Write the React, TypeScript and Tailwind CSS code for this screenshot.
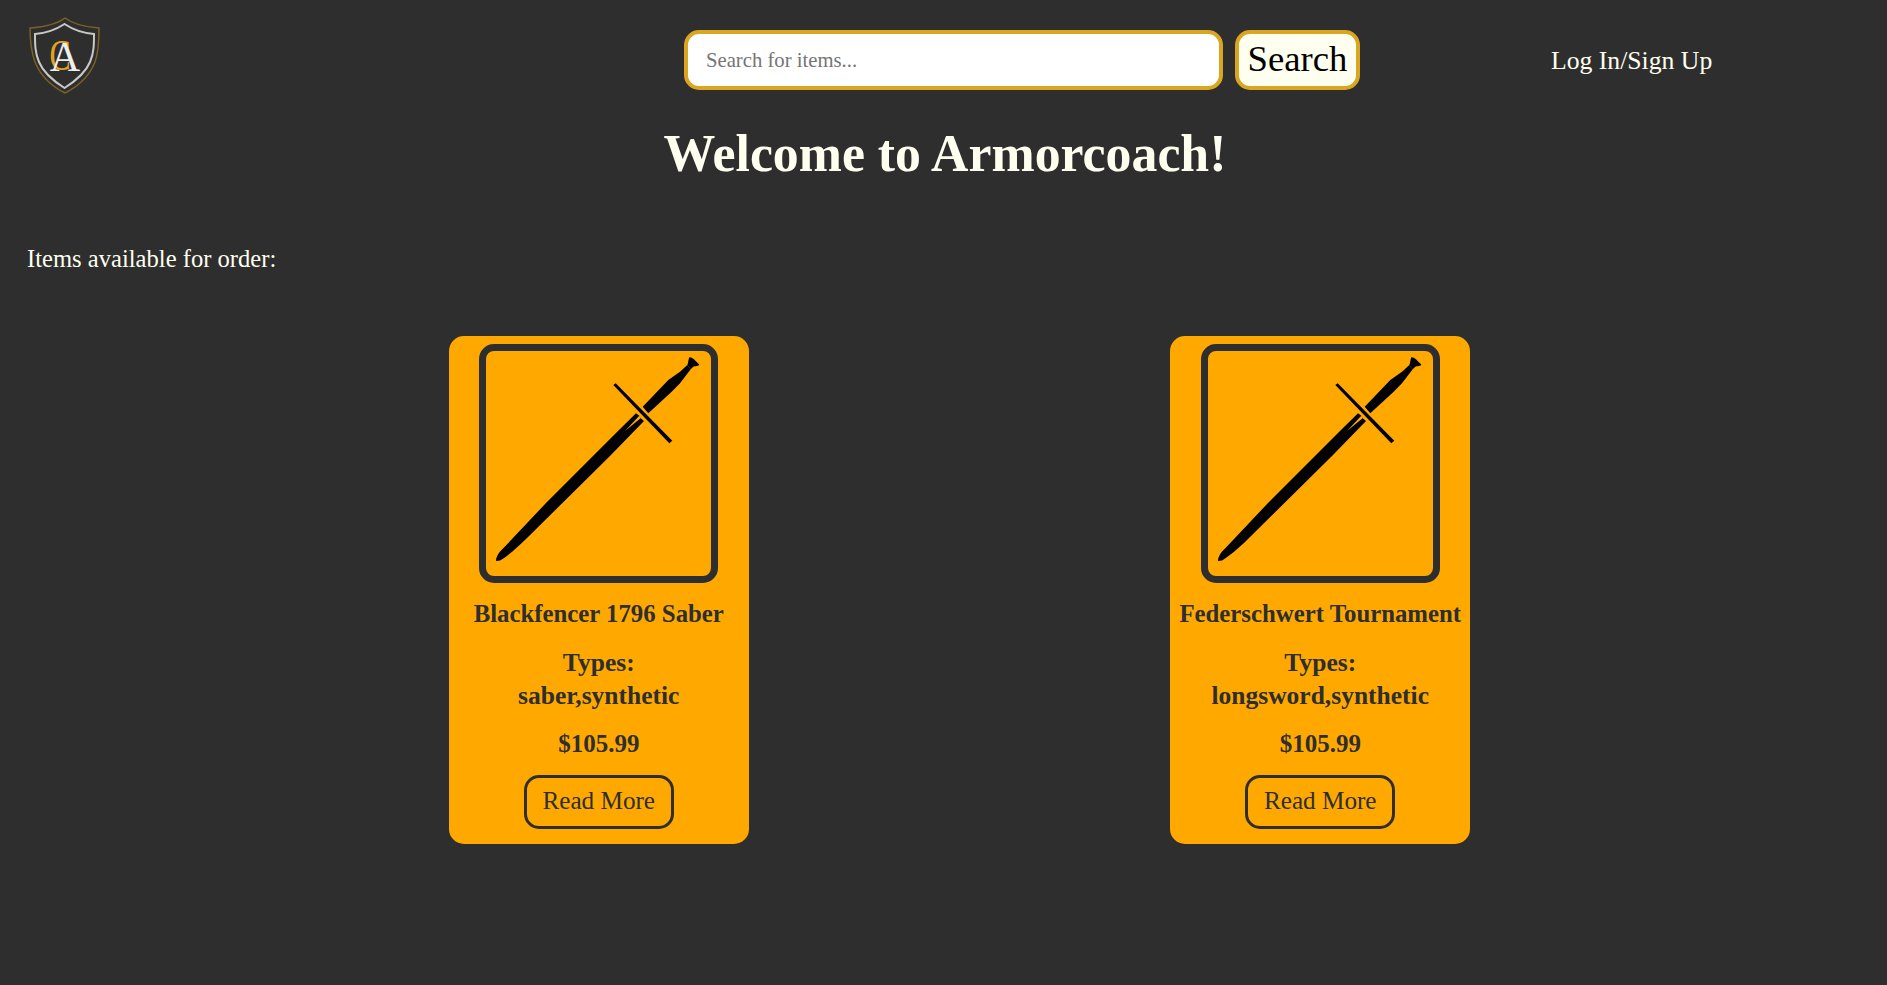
const items = [
  { name: "Blackfencer 1796 Saber", types: "saber,synthetic", price: "$105.99" },
  { name: "Federschwert Tournament", types: "longsword,synthetic", price: "$105.99" },
];

function Logo() {
  return (
    <svg className="w-[73px] h-[77px]" viewBox="0 0 73 77" fill="none">
      <path
        d="M37 1 C45 7 56 10 71 11 C71 22 71 34 67 45 C61 60 49 70 37 76 C25 70 13 60 7 45 C3 34 2 22 2 11 C18 10 29 7 37 1 Z"
        stroke="#7a6125"
        strokeWidth="1.5"
      />
      <path
        d="M36.5 7 C44 12 54 16 66 17 C66 27 66 36 62 45 C57 57 46 65 36.5 71 C27 65 16 57 11 45 C7 36 7 27 7 17 C19 16 29 12 36.5 7 Z"
        stroke="#c8c8c4"
        strokeWidth="2"
      />
      <text
        x="32"
        y="53"
        textAnchor="middle"
        fontSize="44"
        fill="#e0a420"
        fontFamily="'Liberation Serif', serif"
        transform="translate(32 0) scale(0.72 1) translate(-32 0)"
      >
        C
      </text>
      <text x="37" y="54" textAnchor="middle" fontSize="42" fill="#eeeeea" fontFamily="'Liberation Serif', serif">
        A
      </text>
    </svg>
  );
}

function Sword() {
  return (
    <svg className="w-full h-full" viewBox="0 0 225 225">
      {/* pommel */}
      <path d="M203.3 6.3 C206 5.8 209 9 213.2 13.6 C213.5 15 211 15 207.3 15.7 L204.7 18.3 L201.3 14 C202.3 12 202.3 9 203.3 6.3 Z" fill="#000" />
      {/* grip */}
      <path d="M201.3 14 L204.7 18.3 L194 32.3 L185.7 40.7 L162.3 62.3 L156.7 55.7 L182.3 29 L194 20.7 Z" fill="#000" />
      {/* guard */}
      <path d="M127.3 34 L129.7 32.3 L186.3 89.7 L183.3 92.3 Z" fill="#000" />
      {/* blade */}
      <path d="M150 62.3 L153.3 64.7 L154.7 67.3 L158 70 L124 105 L40 188 C30 198 20 206 14 209.5 L10 210 C10 206 13 201 17.3 197.3 L60 152 L134 78 Z" fill="#000" />
      {/* fuller */}
      <path d="M153.3 64.7 L154.9 67.1 L139 80 Z" fill="#ffa900" />
    </svg>
  );
}

function ItemCard({ name, types, price }: { name: string; types: string; price: string }) {
  return (
    <div className="w-[300px] h-[508px] bg-[#ffa900] rounded-[15px] flex flex-col items-center pt-2 text-[#2e2e2e]">
      <div className="w-[239px] h-[239px] border-[7px] border-[#2e2e2e] rounded-[15px]">
        <Sword />
      </div>
      <h3 className="mt-[15px] text-[24.8px] leading-[32px] font-bold whitespace-nowrap">{name}</h3>
      <p className="mt-[16px] text-[25.5px] leading-[33px] font-bold text-center">
        Types:
        <br />
        {types}
      </p>
      <p className="mt-[16px] text-[25px] leading-[32px] font-bold">{price}</p>
      <button className="mt-[15px] w-[150px] h-[54px] pb-[2px] border-[3px] border-[#2e2e2e] rounded-[15px] text-[25.2px]">
        Read More
      </button>
    </div>
  );
}

export default function App() {
  return (
    <div className="min-h-[985px] bg-[#2e2e2e] font-['Liberation_Serif',serif] text-[#fffff0]">
      <header className="flex items-start h-[112px]">
        <div className="w-[684px] pl-[28px] pt-[17px] shrink-0">
          <Logo />
        </div>
        <div className="flex gap-[12px] pt-[30px]">
          <input
            placeholder="Search for items..."
            className="w-[539px] h-[60px] bg-white border-4 border-[#daa520] rounded-[15px] px-[18px] text-[20.7px] text-black placeholder:text-[#757575] outline-none"
          />
          <button className="w-[125px] h-[60px] pb-[2px] leading-none bg-[#fffff0] border-4 border-[#daa520] rounded-[15px] text-[36.7px] text-black">
            Search
          </button>
        </div>
        <a className="ml-[191px] pt-[41px] text-[25.7px] leading-[40px] whitespace-nowrap">Log In/Sign Up</a>
      </header>
      <h1 className="text-[51.8px] leading-[64px] font-bold text-center mt-[9px] pl-[3px] pt-[1px]">Welcome to Armorcoach!</h1>
      <p className="mt-[57px] pl-[27px] text-[24.6px] leading-[32px]">Items available for order:</p>
      <div className="mt-[61px] ml-[238px] w-[1443px] grid grid-cols-2 justify-items-center">
        {items.map((item) => (
          <ItemCard key={item.name} {...item} />
        ))}
      </div>
    </div>
  );
}
